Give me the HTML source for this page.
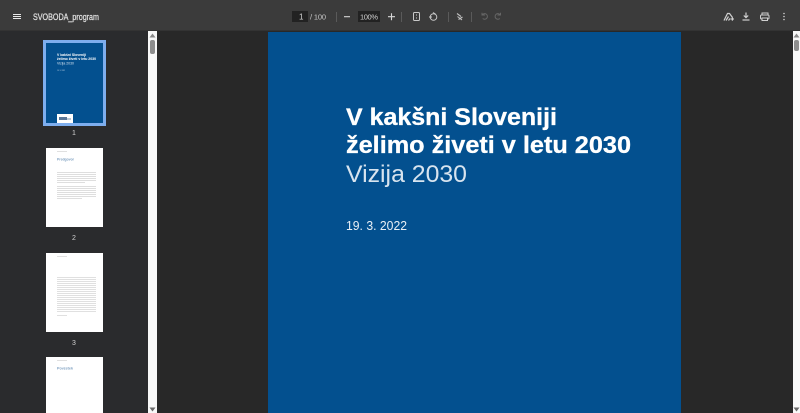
<!DOCTYPE html>
<html><head><meta charset="utf-8"><style>
html,body{margin:0;padding:0;width:800px;height:413px;overflow:hidden;background:#282828}
svg{display:block;position:absolute;left:0;top:0;filter:blur(.25px)}
text{font-family:"Liberation Sans",sans-serif}
</style></head><body>
<svg width="800" height="413" viewBox="0 0 800 413" xmlns="http://www.w3.org/2000/svg">
<defs><filter id="b" x="-5%" y="-5%" width="110%" height="110%"><feGaussianBlur stdDeviation="0.2"/></filter></defs>
<rect width="800" height="413" fill="#282828"/>
<rect width="148" height="413" fill="#2a2b2d"/>
<rect x="148" y="31" width="9" height="382" fill="#f8f8f8"/>
<path d="M152.500 33.500l3 4h-6z" fill="#8a8a8a"/>
<rect x="150" y="40" width="5" height="14" rx="2" fill="#8d8d8d"/>
<path d="M152.500 411.500l-3-4h6z" fill="#6a6a6a"/>
<rect x="793" y="31" width="7" height="382" fill="#f8f8f8"/>
<path d="M796.500 33.500l3 4h-6z" fill="#8a8a8a"/>
<rect x="794" y="40" width="5" height="11" rx="2" fill="#8d8d8d"/>
<path d="M796.500 411.500l-3-4h6z" fill="#6a6a6a"/>

<!-- toolbar -->
<rect width="800" height="30" fill="#3b3b3b"/>
<rect y="30" width="800" height="1" fill="#333"/>
<path d="M13 14.500h8M13 16.500h8M13 18.500h8" stroke="#e8e8e8" stroke-width="1.100" fill="none"/>
<text x="33" y="20" font-size="9" fill="#e0e0e0" stroke="#e0e0e0" stroke-width=".25" textLength="66" lengthAdjust="spacingAndGlyphs">SVOBODA_program</text>

<rect x="292" y="11" width="16" height="11" fill="#222"/>
<text x="299" y="19.500" font-size="8" fill="#d8d8d8">1</text>
<text x="310" y="19.500" font-size="7.500" fill="#c8c8c8" textLength="16">/ 100</text>
<path d="M336.500 12v10M401.500 12v10M448.500 12v10M471.500 12v10" stroke="#5a5a5a"/>
<path d="M344 16.700h6" stroke="#d8d8d8" stroke-width="1.100"/>
<rect x="358" y="11" width="22" height="11" fill="#222"/>
<text x="360" y="19.500" font-size="7.500" fill="#d0d0d0" textLength="18">100%</text>
<path d="M388 16.700h7M391.500 13.200v7" stroke="#d8d8d8" stroke-width="1.100" fill="none"/>
<rect x="413.500" y="12.500" width="6" height="8" rx="1" stroke="#c8c8c8" fill="none"/>
<path d="M416.500 14.500v1M416.500 17.500v1" stroke="#c8c8c8"/>
<circle cx="433.500" cy="17" r="3.300" stroke="#c8c8c8" fill="none"/>
<path d="M433 12.500l2.500 1.500M429 17h3" stroke="#c8c8c8" fill="none"/>
<path d="M457 13.500l4 3M457.500 16.500l4.500 3.500M458.500 19.500l4-2.500" stroke="#c0c0c0" stroke-width="1.100" fill="none"/>
<path d="M485 15h-3v-2.200M482.200 15a2.800 2.800 0 1 1 .5 3.500" stroke="#666" fill="none"/>
<path d="M497.500 15h3v-2.200M500.300 15a2.800 2.800 0 1 0 -.5 3.500" stroke="#666" fill="none"/>

<path d="M724 20.500l3.500-7 2 0 3 4M726 20.500l2.500-4M728.500 20.500l1.500-2" stroke="#d0d0d0" stroke-width="1.200" fill="none"/>
<path d="M730.500 19h3.500M732.300 17.200v3.500" stroke="#e0e0e0" fill="none"/>
<path d="M746 12.500v5M743.800 15.500l2.200 2.200 2.200-2.200" stroke="#d0d0d0" stroke-width="1.200" fill="none"/>
<path d="M742.500 20h7" stroke="#d0d0d0" stroke-width="1.200"/>
<rect x="762" y="13" width="6" height="2" fill="none" stroke="#d0d0d0"/>
<rect x="760.500" y="15" width="8.500" height="4" rx="1" fill="none" stroke="#d0d0d0"/>
<rect x="762" y="18" width="5.500" height="2.500" fill="#3b3b3b" stroke="#d0d0d0"/>
<circle cx="784" cy="13.500" r=".8" fill="#d0d0d0"/><circle cx="784" cy="16.500" r=".8" fill="#d0d0d0"/><circle cx="784" cy="19.500" r=".8" fill="#d0d0d0"/>

<!-- main page -->
<rect x="268" y="32" width="413" height="381" fill="#03508f"/>
<text x="346" y="125" font-size="24" font-weight="700" fill="#fff" stroke="#fff" stroke-width=".3" textLength="211" lengthAdjust="spacingAndGlyphs">V kakšni Sloveniji</text>
<text x="346" y="153" font-size="24" font-weight="700" fill="#fff" stroke="#fff" stroke-width=".3" textLength="285" lengthAdjust="spacingAndGlyphs">želimo živeti v letu 2030</text>
<text x="346" y="182" font-size="24" fill="#d8e4ef" textLength="121" lengthAdjust="spacingAndGlyphs">Vizija 2030</text>
<text x="346" y="230" font-size="13" fill="#e8eff5" textLength="61" lengthAdjust="spacingAndGlyphs">19. 3. 2022</text>

<!-- thumb 1 -->
<rect x="43" y="40" width="63" height="86" fill="#7eaeee"/>
<rect x="46" y="43" width="57" height="80" fill="#03508f"/>
<g filter="url(#b)">
<text x="57" y="56" font-size="3.600" font-weight="700" fill="#fff" textLength="29" lengthAdjust="spacingAndGlyphs">V kakšni Sloveniji</text>
<text x="57" y="60" font-size="3.600" font-weight="700" fill="#fff" textLength="39" lengthAdjust="spacingAndGlyphs">želimo živeti v letu 2030</text>
<text x="57" y="64.500" font-size="3.600" fill="#d5e2ef" textLength="17" lengthAdjust="spacingAndGlyphs">Vizija 2030</text>
<text x="57" y="71" font-size="2" fill="#c5d5e5" textLength="8" lengthAdjust="spacingAndGlyphs">19. 3. 2022</text>
</g>
<rect x="57" y="114" width="16" height="9" fill="#fff"/>
<rect x="59" y="117" width="8" height="3" fill="#5a7798" filter="url(#b)"/>
<rect x="67" y="118" width="4" height="2" fill="#bcc8d4" filter="url(#b)"/>
<text x="74" y="135" font-size="7" fill="#d0d0d0" text-anchor="middle">1</text>

<!-- thumb 2 -->
<rect x="46" y="148" width="57" height="79" fill="#fff"/>
<rect x="57" y="151" width="10" height=".6" fill="#ccc"/>
<text x="57" y="160.500" font-size="3.800" font-weight="700" fill="#7d9fc0" textLength="17" lengthAdjust="spacingAndGlyphs">Predgovor</text>
<path d="M57 172.500h39M57 174.500h39M57 176.500h39M57 178.500h39M57 180.500h39M57 182.500h28M57 186.500h39M57 188.500h39M57 190.500h39M57 192.500h39M57 194.500h39M57 196.500h39M57 198.500h25" stroke="#d4d4d4" stroke-width=".7"/>
<text x="74" y="240" font-size="7" fill="#d0d0d0" text-anchor="middle">2</text>

<!-- thumb 3 -->
<rect x="46" y="253" width="57" height="79" fill="#fff"/>
<rect x="57" y="256" width="10" height=".6" fill="#ccc"/>
<path d="M57 277.500h39M57 279.500h39M57 281.500h39M57 283.500h39M57 285.500h39M57 287.500h39M57 289.500h39M57 291.500h39M57 293.500h39M57 295.500h39M57 297.500h39M57 299.500h39M57 301.500h39M57 303.500h39M57 305.500h39M57 307.500h39M57 309.500h39M57 311.500h39M57 315.500h10" stroke="#d6d6d6" stroke-width=".7"/>
<text x="74" y="345" font-size="7" fill="#d0d0d0" text-anchor="middle">3</text>

<!-- thumb 4 -->
<rect x="46" y="357" width="57" height="56" fill="#fff"/>
<rect x="57" y="360" width="10" height=".6" fill="#ccc"/>
<text x="57" y="369.500" font-size="3.800" font-weight="700" fill="#7d9fc0" textLength="16" lengthAdjust="spacingAndGlyphs">Povzetek</text>
</svg>
</body></html>
